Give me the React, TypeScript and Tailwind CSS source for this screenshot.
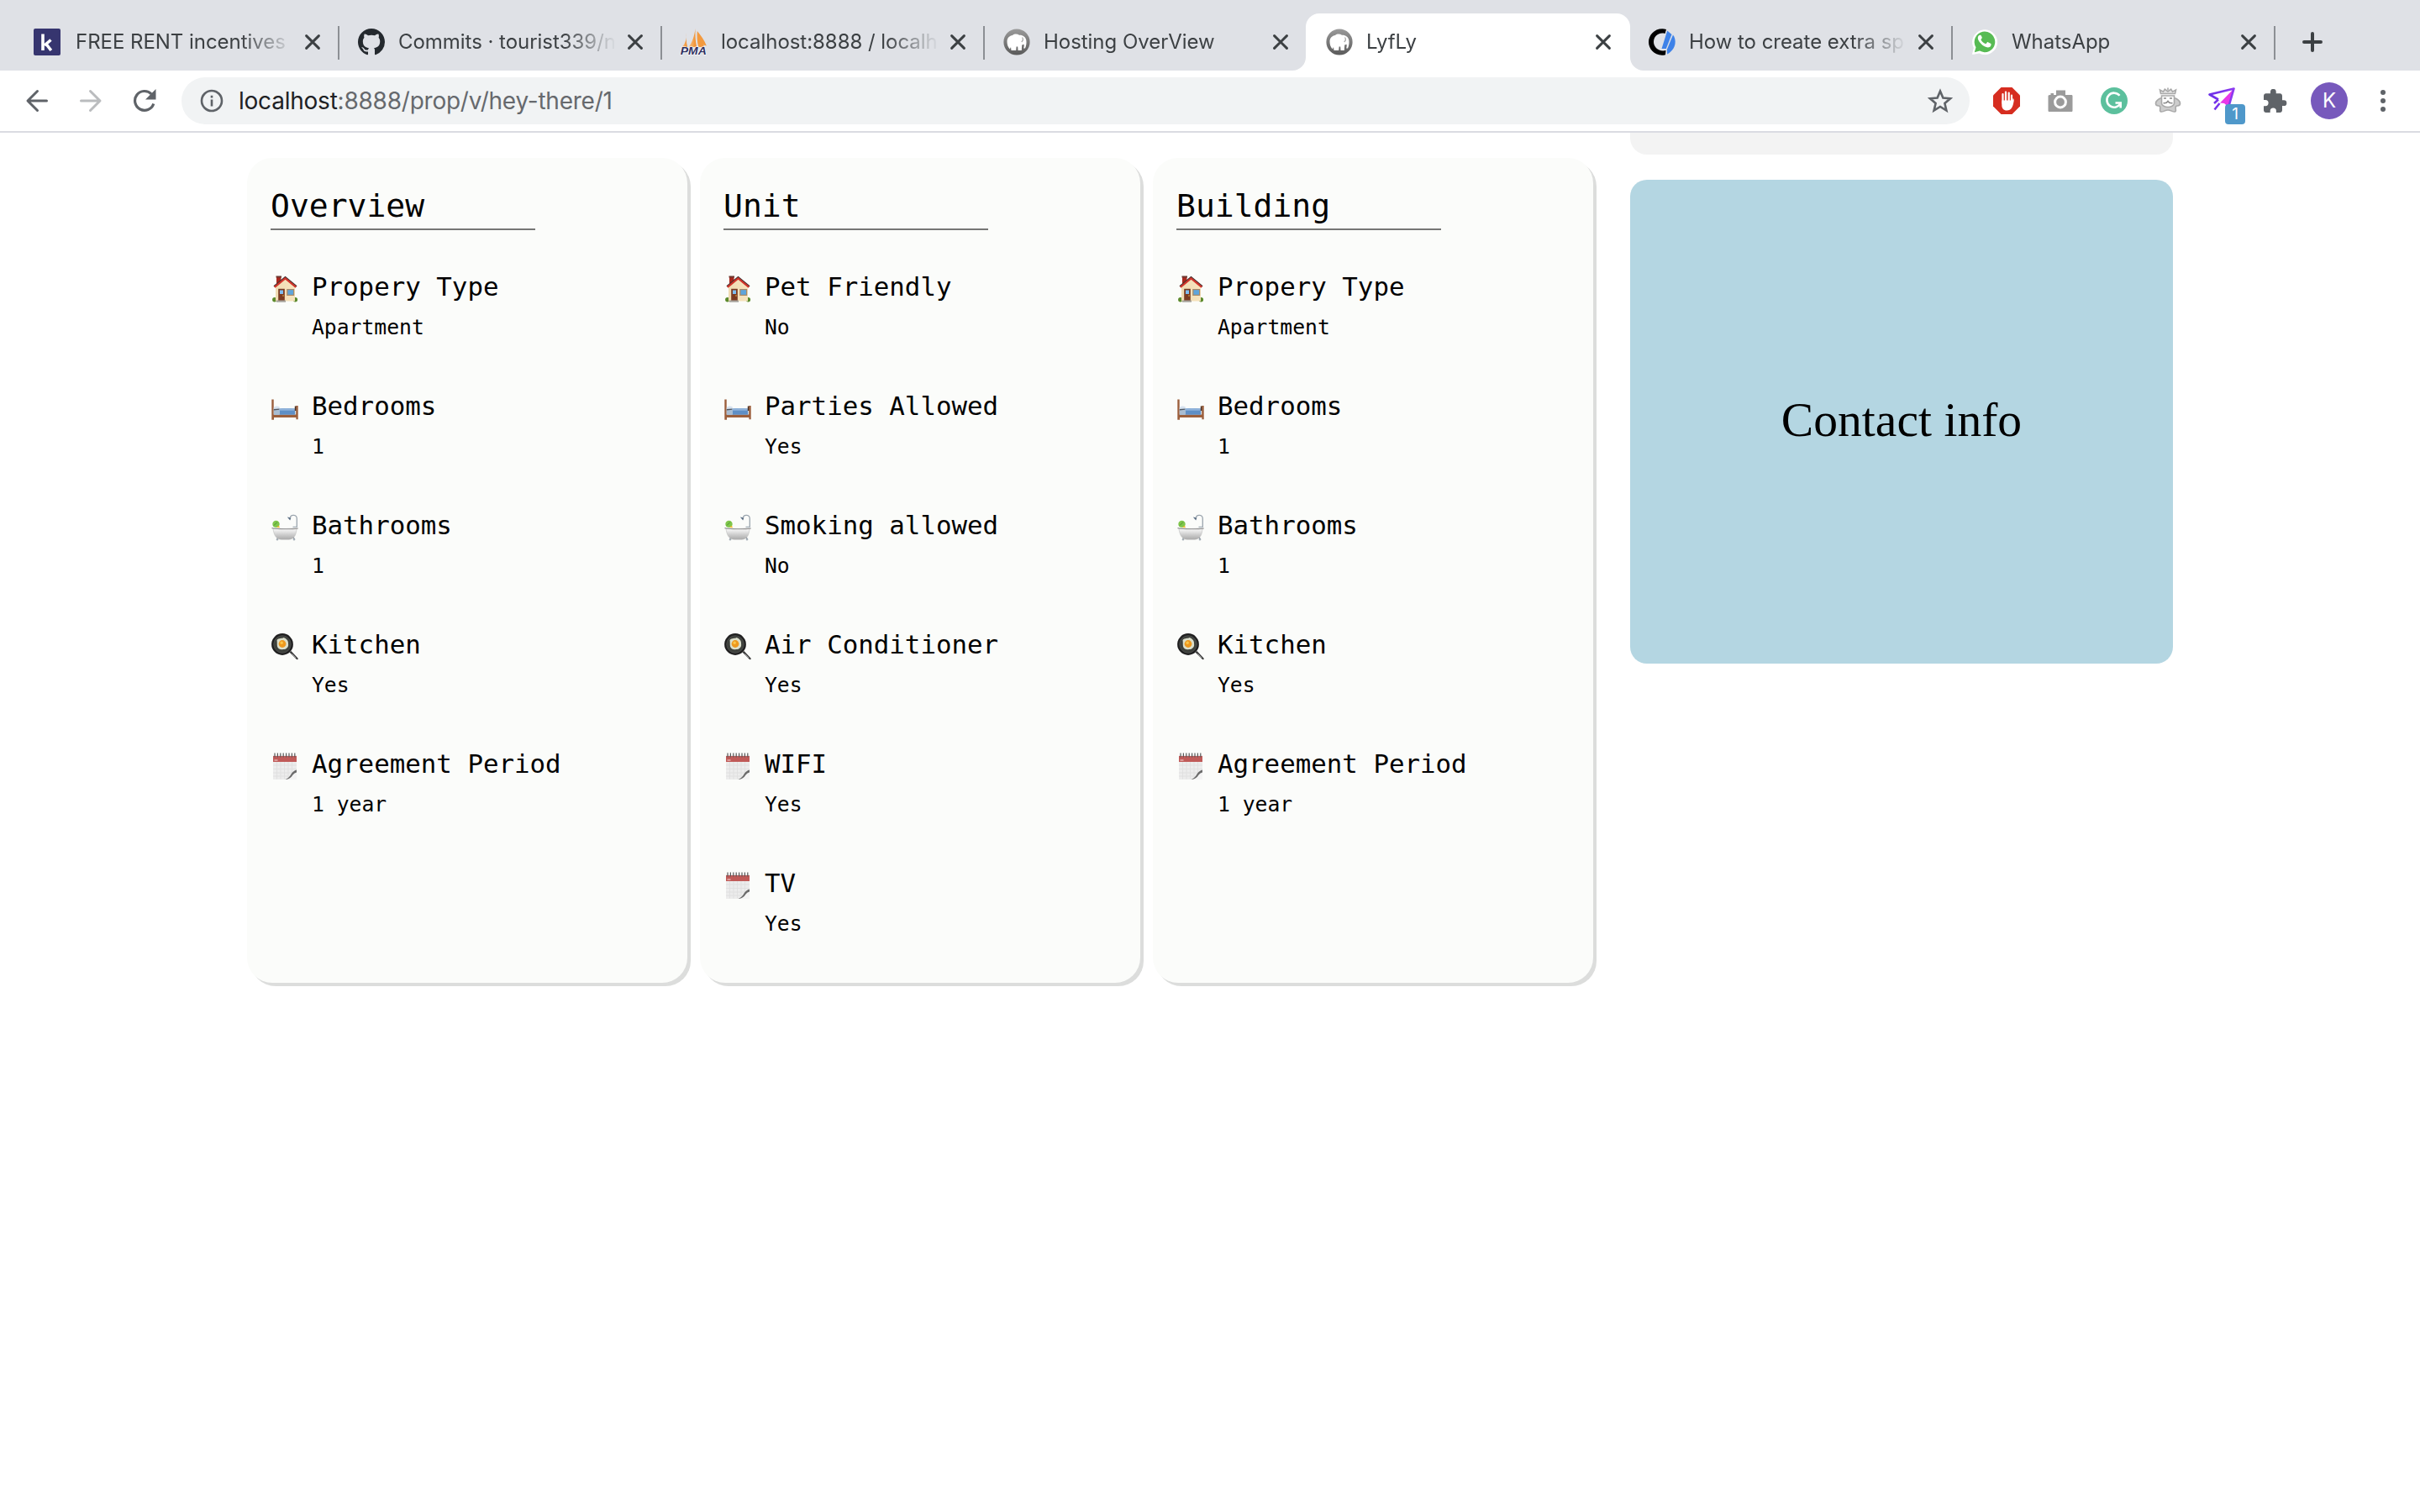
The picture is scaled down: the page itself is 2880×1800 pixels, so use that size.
import React from "react";

type IconProps = { className?: string };

/* ---------- Browser glyphs ---------- */

const CloseIcon = () => (
  <svg viewBox="0 0 20 20" className="h-5 w-5 shrink-0" fill="none" stroke="#3c4043" strokeWidth="3" strokeLinecap="round">
    <path d="M2.6 2.6 17.4 17.4M17.4 2.6 2.6 17.4" />
  </svg>
);

const KIcon = () => (
  <svg viewBox="0 0 32 32" className="-ml-0.5 mr-0.5 h-8 w-8 shrink-0">
    <rect width="32" height="32" rx="2" fill="#36356f" />
    <path d="M11 6.500V26M20.500 13.500 13 20M15 18.500 20.800 26" stroke="#fff" strokeWidth="3.600" fill="none" />
  </svg>
);

const GithubIcon = () => (
  <svg viewBox="0 0 16 16" className="h-8 w-8 shrink-0" fill="#24292e">
    <path d="M8 0C3.580 0 0 3.580 0 8c0 3.540 2.290 6.530 5.470 7.590.4.070.550-.170.550-.380 0-.190-.010-.820-.010-1.490-2.010.370-2.530-.490-2.690-.940-.090-.230-.480-.940-.820-1.130-.280-.150-.680-.520-.010-.530.630-.010 1.080.580 1.230.820.720 1.210 1.870.870 2.330.660.070-.520.280-.870.510-1.070-1.780-.2-3.640-.890-3.640-3.950 0-.870.310-1.590.820-2.150-.080-.2-.360-1.020.080-2.120 0 0 .670-.210 2.200.820.640-.180 1.320-.270 2-.270s1.360.090 2 .270c1.530-1.040 2.200-.820 2.200-.820.440 1.100.160 1.920.080 2.120.510.560.820 1.270.820 2.150 0 3.070-1.870 3.750-3.650 3.950.290.250.540.730.540 1.480 0 1.070-.010 1.930-.010 2.200 0 .210.150.460.550.380A8.010 8.010 0 0 0 16 8c0-4.420-3.580-8-8-8z" />
  </svg>
);

const PmaIcon = () => (
  <svg viewBox="0 0 32 32" className="h-8 w-8 shrink-0 overflow-visible">
    <defs>
      <linearGradient id="sail" x1="0" x2="1">
        <stop offset="0" stopColor="#f8c58c" />
        <stop offset="1" stopColor="#f08a24" />
      </linearGradient>
    </defs>
    <path d="M7 5C7 12 6 18 1.500 22H8C6.500 16 6.500 10 7 5z" fill="url(#sail)" />
    <path d="M17.500 0C16.500 9 13.500 17 9.500 22H19C17.500 14 17.200 7 17.500 0z" fill="url(#sail)" />
    <path d="M19.800 3C24 8 28.500 14 30.800 20.500L27 19.500 28 22H21.200C19.500 15 19.300 9 19.800 3z" fill="#f39a3f" />
    <text x="-.2" y="31" textLength="31" lengthAdjust="spacingAndGlyphs" fontFamily="Liberation Sans" fontSize="12.500" fontWeight="700" fontStyle="italic" fill="#2f3061" stroke="#fff" strokeWidth="1.200" paintOrder="stroke">
      PMA
    </text>
  </svg>
);

const ElephantIcon = () => (
  <svg viewBox="0 0 32 32" className="h-8 w-8 shrink-0">
    <defs>
      <linearGradient id="ring" x1="0" y1="0" x2="0" y2="1">
        <stop offset="0" stopColor="#9a9a9a" />
        <stop offset="1" stopColor="#5a5a5a" />
      </linearGradient>
    </defs>
    <circle cx="16" cy="16" r="15.600" fill="url(#ring)" />
    <path d="M4.500 15.500C4.500 11 7.500 8.500 11 8c2-1.800 5.500-2 8-.3 4.500-.2 7.500 2.300 8.300 6 .6 3.300 0 7-1.300 9.800h-1.800c.5-1.600.7-3.200.4-4.700l-2.400.6-.4 6.600h-4.300l-.3-4.500h-1.600l-.4 4.500H9.500L9 22l-1.200 2.500C5.500 22 4.500 19 4.500 15.500z" fill="#fff" />
    <path d="M22.500 10.500c1.200 1.500 1.300 3.500-.8 5.500" stroke="#a5a5a5" strokeWidth="1.200" fill="none" />
  </svg>
);

const CoderIcon = () => (
  <svg viewBox="0 0 32 32" className="h-8 w-8 shrink-0">
    <path d="M21 .9C8.500-2 0 7 0 16s8.500 18 20 15.200l.5-5.200C12 28 6 22 6 16S11 4 19.500 6z" fill="#000" />
    <path d="M22.200 2.500 27.500 7 20.800 24H15.500z" fill="#3e82e8" />
    <path d="M29 7.500c4.500 6 4 17-6.800 23l-.4-5.500z" fill="#3e82e8" />
  </svg>
);

const WhatsappIcon = () => (
  <svg viewBox="0 0 32 32" className="h-8 w-8 shrink-0">
    <path d="M1.500 30.500 3.300 23A14.500 14.500 0 1 1 9.300 29z" fill="#fff" stroke="#fff" strokeWidth="1" />
    <path d="M3.800 28.300 5.500 22.300A12.300 12.300 0 1 1 10 26.600z" fill="#57bb54" />
    <path d="M12 8.800c-.5-1-1-1-1.500-1-1.500 0-2.700 1.500-2.700 3.500 0 1.500 1 3.300 2.200 4.900 2 2.600 4.200 4.700 7.600 5.900 3.400 1.200 5.500-.5 5.900-2.700.2-1.200 0-1.400-.6-1.700l-3-1.500c-.5-.2-.8-.1-1.100.3l-1.200 1.500c-.3.3-.6.3-1 .1-2-.9-4-2.600-5-4.600-.2-.4-.1-.7.2-1l.8-1.100c.3-.3.300-.6.100-1z" fill="#fff" />
  </svg>
);

const Elbow = ({ className }: IconProps) => (
  <svg viewBox="0 0 16 16" className={className} fill="#fff">
    <path d="M16 0v16H0A16 16 0 0 0 16 0z" />
  </svg>
);

/* ---------- Emoji style pictures ---------- */

const House = () => (
  <svg viewBox="0 0 32 32" className="h-8 w-8">
    <defs>
      <linearGradient id="wall" x1="0" x2="1">
        <stop offset="0" stopColor="#f0dcb4" />
        <stop offset="1" stopColor="#f7e3bd" />
      </linearGradient>
    </defs>
    <circle cx="3.800" cy="28.800" r="2.700" fill="#5c8a2c" />
    <circle cx="28.400" cy="28.800" r="2.700" fill="#5c8a2c" />
    <rect x="6" y="1" width="5.500" height="9" fill="#a8271d" />
    <rect x="5.500" y=".5" width="6.500" height="2" fill="#6d3a33" />
    <path d="M5 12.500 16.500 3 28 12.500V30.500H5z" fill="url(#wall)" />
    <path d="M3 12.800 16.500 1.800 30 12.800" stroke="#43302e" strokeWidth="1.600" fill="none" />
    <path d="M3.800 13.800 16.500 3.500 29.200 13.800" stroke="#d0342b" strokeWidth="2.200" fill="none" />
    <rect x="8.200" y="15.800" width="7.600" height="14.200" fill="#7b3b22" />
    <rect x="10" y="17.500" width="4" height="4.500" fill="#7fbdf0" />
    <circle cx="14" cy="24" r=".8" fill="#e9b53c" />
    <rect x="18.200" y="16" width="9" height="8" fill="#a98a67" />
    <rect x="19.500" y="17.200" width="6.500" height="5.600" fill="#5fa5dc" />
    <rect x="6" y="29.500" width="11" height="2.200" fill="#a6a39c" />
  </svg>
);

const Bed = () => (
  <svg viewBox="0 0 32 32" className="h-8 w-8">
    <path d="M.3 5.500h2.400V23.500h26.500V13h2.500v16.300h-2.300V27H3v2.800H.3z" fill="#9c5f3c" />
    <path d="M2.800 16h7v8h-7z" fill="#a9bdd2" />
    <path d="M2.800 15c2-2 4.500-2 6.800-.8l.4 3.300H2.800z" fill="#d6e2ef" />
    <path d="M2.800 17 9.500 16.500v1.200L2.800 18.400z" fill="#4f5661" />
    <path d="M9.800 16.500c6-1 12-.5 18.500 0v7.300H9.800z" fill="#5f8fc6" />
    <path d="M9.800 16.500c6-1 12-.5 18.500 0v2.300H9.800z" fill="#8fb2da" />
    <path d="M27.800 13.500h1.600V19h-1.600z" fill="#4a3023" />
  </svg>
);

const Bath = () => (
  <svg viewBox="0 0 32 32" className="h-8 w-8">
    <defs>
      <linearGradient id="tub" x1="0" y1="0" x2="0" y2="1">
        <stop offset="0" stopColor="#fafafa" />
        <stop offset="1" stopColor="#a9a9a9" />
      </linearGradient>
    </defs>
    <circle cx="5.500" cy="12" r="4.200" fill="#7fc64b" />
    <path d="M3 13.500 7 9.500" stroke="#4f9632" strokeWidth="1" />
    <path d="M6.500 16.500c0-2.500 3-3 3.500-.5z" fill="#f4b727" />
    <path d="M30.300 16.500V5.500c0-5-6.800-5.500-8-1.500" stroke="#9ba5ae" strokeWidth="1.300" fill="none" />
    <path d="m18.800 3.400 4.600 1-1.200 3z" fill="#5c6f84" />
    <path d="M25.500 15.300h4.500" stroke="#8e9aa5" strokeWidth="1" />
    <path d="m8.500 27.500-2 2.500M25.500 27.500l2.200 2.500" stroke="#8c959e" strokeWidth="1.600" />
    <circle cx="7" cy="30.300" r="1.200" fill="#a6afb7" />
    <circle cx="27" cy="30.300" r="1.200" fill="#a6afb7" />
    <path d="M2 17.500H30C29.500 25 27 30 20.500 30.300H12C5.500 30 3 25 2 17.500z" fill="url(#tub)" stroke="#b5b5b5" strokeWidth=".5" />
    <path d="M.5 16.600C8 18 24 18 31.500 17" stroke="#8c8c8c" strokeWidth="1.300" fill="none" />
    <path d="M1.500 15.800C9 17 24 17 31 16.200" stroke="#f4f4f4" strokeWidth=".8" fill="none" />
  </svg>
);

const Pan = () => (
  <svg viewBox="0 0 32 32" className="h-8 w-8">
    <path d="m21.500 22.500 2-1.500 8 8.500c.6 1-.4 2.200-1.500 1.600z" fill="#3c3c3c" />
    <path d="m24.500 24.500 4.500 4.500" stroke="#9a9a9a" strokeWidth="1" />
    <circle cx="13" cy="13" r="12.900" fill="#1f1f1f" />
    <circle cx="13" cy="13" r="10.300" fill="#3e413c" stroke="#5a5a5a" strokeWidth=".6" />
    <path d="M6.500 8c2.500-3 6-1.500 8-3 3.500 1 6 4 5.500 7.500 1 4-3 7-6 6.500-3 .8-6.500-.5-7-3.500-.5-2.500 0-5-.5-7.500z" fill="#dcdfcb" />
    <circle cx="13" cy="12.500" r="4.400" fill="#ee991e" />
    <circle cx="12.200" cy="11.300" r="1.700" fill="#fbc64a" />
  </svg>
);

const Calendar = () => (
  <svg viewBox="0 0 32 32" className="h-8 w-8">
    <path d="M2 3h28v19L18 32H2z" fill="#ececec" />
    <path d="M6.500 11v20.500M11 11v20.500M15.500 11v20.500M20 11v18M24.500 11v12M2 15h28M2 19.500h28M2 24h23M2 28h19" stroke="#dedede" strokeWidth=".8" />
    <rect x="2" y="4" width="28" height="7" fill="#c05a58" />
    <path d="M3.500 9h4" stroke="#e6b0ae" strokeWidth="1.500" />
    <path d="M4 .5v5M7.400.5v5M10.800.5v5M14.200.5v5M17.600.5v5M21 .5v5M24.400.5v5M27.800.5v5" stroke="#5a5a5a" strokeWidth="1.200" />
    <path d="M30 21c-3 .5-4.500 2-6.500 5-2 3-4 5-7.500 6h14z" fill="#f4f4f4" />
    <path d="M30 20.500c-3 1-5 2.500-6.500 5-1.500 2.800-3.500 5-7 6.500 6-.5 7.500-3.500 9-5.500 1.200-1.700 3-2.500 4.500-3z" fill="#6b6b6b" />
  </svg>
);

/* ---------- Data ---------- */

type Tab = { title: string; icon: React.ReactNode; active?: boolean; sep?: boolean };

const tabs: Tab[] = [
  { title: "FREE RENT incentives a", icon: <KIcon /> },
  { title: "Commits · tourist339/n", icon: <GithubIcon />, sep: true },
  { title: "localhost:8888 / localh", icon: <PmaIcon />, sep: true },
  { title: "Hosting OverView", icon: <ElephantIcon />, sep: true },
  { title: "LyfLy", icon: <ElephantIcon />, active: true },
  { title: "How to create extra sp", icon: <CoderIcon /> },
  { title: "WhatsApp", icon: <WhatsappIcon />, sep: true },
];

type Row = { icon: React.ReactNode; label: string; value: string };

const general: Row[] = [
  { icon: <House />, label: "Propery Type", value: "Apartment" },
  { icon: <Bed />, label: "Bedrooms", value: "1" },
  { icon: <Bath />, label: "Bathrooms", value: "1" },
  { icon: <Pan />, label: "Kitchen", value: "Yes" },
  { icon: <Calendar />, label: "Agreement Period", value: "1 year" },
];

const unit: Row[] = [
  { icon: <House />, label: "Pet Friendly", value: "No" },
  { icon: <Bed />, label: "Parties Allowed", value: "Yes" },
  { icon: <Bath />, label: "Smoking allowed", value: "No" },
  { icon: <Pan />, label: "Air Conditioner", value: "Yes" },
  { icon: <Calendar />, label: "WIFI", value: "Yes" },
  { icon: <Calendar />, label: "TV", value: "Yes" },
];

/* ---------- Sections ---------- */

const TabItem = ({ tab }: { tab: Tab }) => (
  <div className="relative mt-4 h-[68px] w-[384px] shrink-0">
    {tab.active && (
      <>
        <div className="absolute inset-y-0 left-0 w-[386px] rounded-t-2xl bg-white" />
        <Elbow className="absolute bottom-0 -left-4 h-4 w-4" />
        <Elbow className="absolute bottom-0 left-[386px] h-4 w-4 -scale-x-100" />
      </>
    )}
    {tab.sep && <div className="absolute top-[15px] left-0 h-10 w-0.5 bg-[#8c8f94]" />}
    <div className="relative flex h-full items-center pl-6">
      {tab.icon}
      <div className="ml-4 w-[257px] text-[24px] leading-8 tracking-[-0.04px] whitespace-nowrap text-[#3c4043] [mask-image:linear-gradient(to_right,black_196px,transparent_260px)]">
        {tab.title}
      </div>
      <div className="ml-[15px]">
        <CloseIcon />
      </div>
    </div>
  </div>
);

const TabStrip = () => (
  <div className="flex h-[84px] bg-[#dfe1e6] pl-[18px]">
    {tabs.map((t) => (
      <TabItem key={t.title} tab={t} />
    ))}
    <div className="mt-[31px] h-10 w-0.5 bg-[#8c8f94]" />
    <svg viewBox="0 0 24 24" className="mt-[38px] ml-8 h-6 w-6" stroke="#3c4043" strokeWidth="4" strokeLinecap="round">
      <path d="M12 2v20M2 12h20" />
    </svg>
  </div>
);

const Toolbar = () => (
  <div className="flex h-[74px] items-center border-b-2 border-[#dadbe2] bg-white">
    <svg viewBox="0 0 28 28" className="ml-[30px] h-7 w-7" fill="none" stroke="#5f6368" strokeWidth="3" strokeLinecap="round" strokeLinejoin="round">
      <path d="M14.500 2.500 3 14l11.500 11.500M3.500 14H25.500" />
    </svg>
    <svg viewBox="0 0 28 28" className="ml-9 h-7 w-7" fill="none" stroke="#babcbe" strokeWidth="3" strokeLinecap="round" strokeLinejoin="round">
      <path d="M13.500 2.500 25 14 13.500 25.500M24.500 14H2.500" />
    </svg>
    <svg viewBox="0 0 28 28" className="ml-9 h-7 w-7">
      <path d="M24.800 17.500A11.400 11.400 0 1 1 22.200 6" fill="none" stroke="#5f6368" strokeWidth="3.200" />
      <path d="M27.500 0v12.500H15z" fill="#5f6368" />
    </svg>
    <div className="ml-[30px] flex h-14 w-[2128px] items-center rounded-full bg-[#f1f3f4]">
      <svg viewBox="0 0 28 28" className="ml-[22px] h-7 w-7" fill="none" stroke="#5f6368">
        <circle cx="14" cy="14" r="12" strokeWidth="2.600" />
        <path d="M14 12.500V20.500M14 7.800v2.600" strokeWidth="2.600" />
      </svg>
      <div className="ml-[18px] text-[28px] leading-9 tracking-[-0.23px] whitespace-nowrap text-[#66696d]">
        <span className="text-[#202124]">localhost</span>:8888/prop/v/hey-there/1
      </div>
      <svg viewBox="0 0 30 30" className="mr-5 ml-auto h-[30px] w-[30px]" fill="none" stroke="#5f6368" strokeWidth="2.600" strokeLinejoin="miter">
        <path d="m15 3.500 3.400 8.100 8.600.7-6.600 5.700 2 8.600-7.400-4.600-7.400 4.600 2-8.600L3 12.300l8.600-.7z" />
      </svg>
    </div>
    <svg viewBox="0 0 32 32" className="ml-[28px] h-8 w-8">
      <path d="M9.500 0h13L32 9.500v13L22.500 32h-13L0 22.500v-13z" fill="#d62d20" />
      <path d="M11.500 19V8M15 16V5.500M18.700 16V6.500M22 17.500V9.500" stroke="#fff" strokeWidth="2.200" strokeLinecap="round" />
      <path d="M10.400 15.500h12.700l.4-2.500c1.500 1 1.500 2.500.8 5-.8 4.500-2.500 9.500-8 9.500-4 0-6-2.500-6-6.500z" fill="#fff" />
    </svg>
    <svg viewBox="0 0 30 28" className="ml-[33px] h-7 w-[30px]" fill="#9b9b9b">
      <path d="M10 1.500h11V7h7c1 0 1.500.5 1.500 1.500v17c0 1-.5 1.500-1.500 1.500H2c-1 0-1.500-.5-1.500-1.500v-17C.5 7.500 1 7 3.500 7V5H7v2h3z" />
      <circle cx="15" cy="15.500" r="6.400" fill="none" stroke="#fff" strokeWidth="3" />
    </svg>
    <svg viewBox="0 0 32 32" className="ml-[33px] h-8 w-8">
      <circle cx="16" cy="16" r="16" fill="#5cc09d" />
      <path d="M22.500 9.800A8.500 8.500 0 1 0 23.500 19" fill="none" stroke="#fff" strokeWidth="2.600" />
      <path d="M17.500 18.500h6.200v6" fill="none" stroke="#fff" strokeWidth="2.600" />
    </svg>
    <svg viewBox="0 0 32 32" className="ml-8 h-8 w-8" fill="none" stroke="#a9a9a9" strokeWidth="1.600">
      <path d="M7.500 7.500 6.500 3l4 2.200 1.800-3L16 5l3.700-2.800 1.800 3 4-2.200-1 4.500z" fill="#e2e2e2" />
      <path d="M16 .5v3" />
      <path d="M7 13c-4 2-6.500 5-5 8 2 1.500 3.500.5 4.500 1.500 1 4-1 6 1 6.500 3 .5 5-2 8.500-2s5.500 2.500 8.500 2c2-.5 0-2.500 1-6.500 1-1 2.500 0 4.500-1.500 1.500-3-1-6-5-8z" fill="#cdcdcd" />
      <path d="M8.500 10h15v9c0 2.500-4 4.500-7.500 4.500S8.500 21.500 8.500 19z" fill="#fff" />
      <path d="M11 13h3M18 13h3M10.500 18.500c2 .5 4.500-.5 5.500-2 1 1.500 3.500 2.500 5.500 2" stroke="#8b8b8b" />
    </svg>
    <div className="relative ml-8 h-8 w-8">
      <svg viewBox="0 0 32 32" className="h-8 w-8">
        <defs>
          <linearGradient id="plane" x1="0" x2="1">
            <stop offset="0" stopColor="#6b2fe8" />
            <stop offset="1" stopColor="#8d3bf0" />
          </linearGradient>
        </defs>
        <path d="M14 18.500 30 2 24.500 24 19 19z" fill="#e838e8" />
        <path d="M24 24 30.500 1.500 1.500 8.500l10.500 6M7 19l5-4.500M7.500 26.500 13.500 19" fill="none" stroke="url(#plane)" strokeWidth="2.600" strokeLinejoin="round" />
      </svg>
      <div className="absolute top-5 left-5 flex h-6 w-6 items-center justify-center rounded-[4px] bg-[#4f98ca] text-[19px] leading-6 text-white">1</div>
    </div>
    <svg viewBox="0 0 28 28" className="ml-[34px] h-7 w-7" fill="#5f6368">
      <path d="M24 13.300H22V8c0-1.500-1.200-2.700-2.700-2.700H14.700V3.300a3.300 3.300 0 0 0-6.700 0v2H2.700C1.200 5.300 0 6.500 0 8v5h2a3.600 3.600 0 0 1 0 7.200H0v5.100C0 26.800 1.200 28 2.700 28h5v-2a3.600 3.600 0 0 1 7.200 0v2h4.400c1.500 0 2.700-1.200 2.700-2.700V20h2a3.350 3.350 0 0 0 0-6.700z" />
    </svg>
    <div className="ml-7 flex h-11 w-11 items-center justify-center rounded-full bg-[#7759bc] text-[24px] leading-none text-white">K</div>
    <div className="ml-[39px] flex flex-col gap-1">
      <span className="h-1.5 w-1.5 rounded-full bg-[#5f6368]" />
      <span className="h-1.5 w-1.5 rounded-full bg-[#5f6368]" />
      <span className="h-1.5 w-1.5 rounded-full bg-[#5f6368]" />
    </div>
  </div>
);

const Card = ({ title, rows }: { title: string; rows: Row[] }) => (
  <section className="h-[982px] w-[524px] rounded-[30px] bg-[#fbfcfa] pt-[35px] pl-7 shadow-[4px_4px_0_#dcdddc]">
    <h2 className="h-[51px] w-[315px] border-b-2 border-[#767675] text-[38px] leading-[44px]">{title}</h2>
    <ul className="mt-[47px]">
      {rows.map((r) => (
        <li key={r.label} className="flex h-[142px] items-start">
          <div className="mt-[7px] ml-px">{r.icon}</div>
          <div className="ml-4">
            <div className="text-[30.8px] leading-10">{r.label}</div>
            <div className="mt-[9px] text-[24.7px] leading-10">{r.value}</div>
          </div>
        </li>
      ))}
    </ul>
  </section>
);

export default function App() {
  return (
    <div className="h-[1800px] w-[2880px] overflow-hidden bg-white font-['Inter',sans-serif]">
      <TabStrip />
      <Toolbar />
      <main className="flex items-start pl-[294px] text-black">
        <div className="mt-[30px] flex gap-[15px] font-['DejaVu_Sans_Mono',monospace]">
          <Card title="Overview" rows={general} />
          <Card title="Unit" rows={unit} />
          <Card title="Building" rows={general} />
        </div>
        <aside className="ml-11 w-[646px]">
          <div className="h-[26px] rounded-b-[20px] bg-[#f3f3f3]" />
          <div className="mt-[30px] flex h-[576px] items-center justify-center rounded-[20px] bg-[#b4d6e2] pb-1 font-['Liberation_Serif',serif] text-[57.6px] leading-none">
            Contact info
          </div>
        </aside>
      </main>
    </div>
  );
}
